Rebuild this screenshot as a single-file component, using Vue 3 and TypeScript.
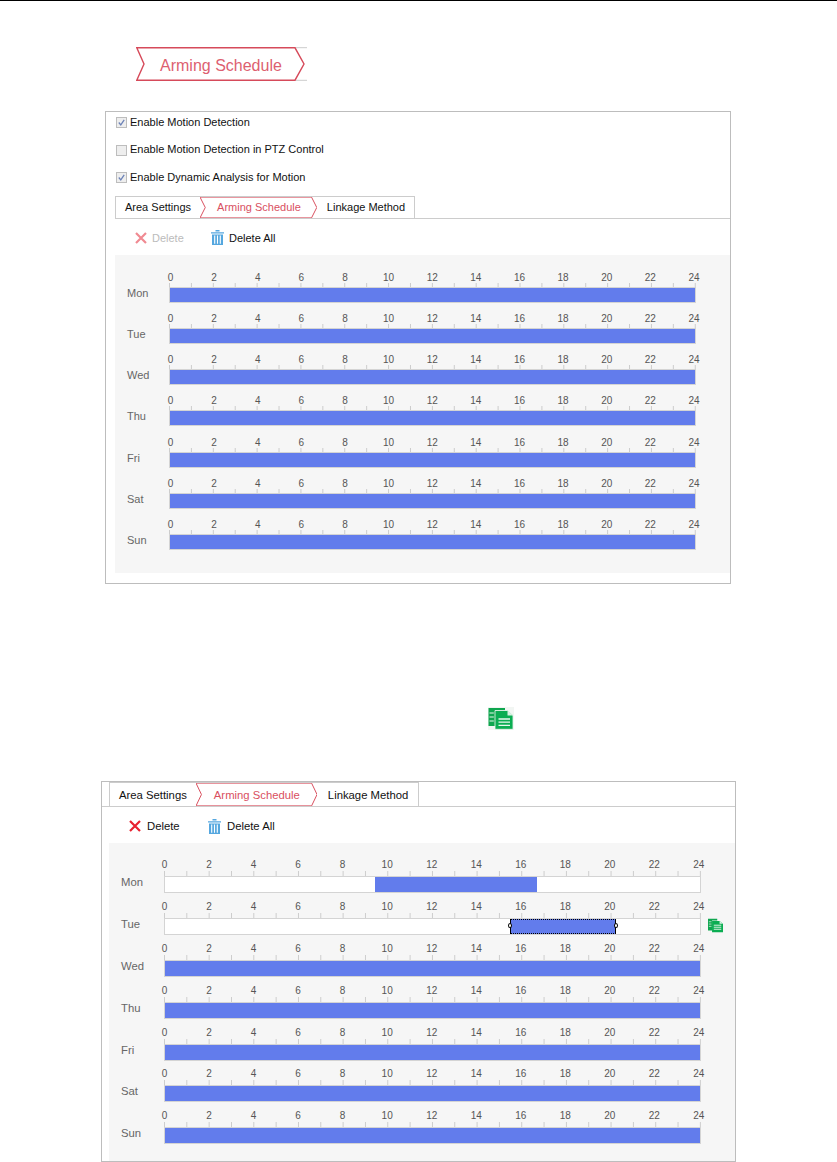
<script setup lang="ts">
interface Seg { left: number; width: number; selected?: boolean }
interface Day { name: string; segs: Seg[]; copy?: boolean }

const full: Seg[] = [{ left: 0, width: 100 }]
const names = ['Mon', 'Tue', 'Wed', 'Thu', 'Fri', 'Sat', 'Sun']
const hours = Array.from({ length: 13 }, (_, i) => i * 2)
const checks = [
  { label: 'Enable Motion Detection', on: true },
  { label: 'Enable Motion Detection in PTZ Control', on: false },
  { label: 'Enable Dynamic Analysis for Motion', on: true },
]
const daysA: Day[] = names.map((name) => ({ name, segs: full }))
const daysB: Day[] = names.map((name) => ({ name, segs: full }))
daysB[0] = { name: 'Mon', segs: [{ left: 39.25, width: 30.2 }] }
daysB[1] = { name: 'Tue', segs: [{ left: 64.4, width: 19.9, selected: true }], copy: true }

const panels = [
  { key: 'a', days: daysA, checks, deleteOn: false },
  { key: 'b', days: daysB, checks: [], deleteOn: true },
]
</script>

<template>
  <div class="page">
    <div class="rule"></div>

    <div class="banner">
      <svg class="shape" viewBox="0 0 171 34" preserveAspectRatio="none">
        <path d="M159 0.7H171M159 33.3H171" stroke="#ccc" fill="none" />
        <path d="M0.8 0.8H159L168 17L159 33.2H0.8L8 17Z" stroke="#d64a5a" stroke-width="1.4" fill="none" />
      </svg>
      <span>Arming Schedule</span>
    </div>

    <template v-for="p in panels" :key="p.key">
      <div v-if="p.key === 'b'" class="copy-line">
        <svg class="copy big" viewBox="0 0 26 23">
          <rect width="26" height="23" fill="#f2f6f3" />
          <path d="M0.5 1H17V3.5H7V19H0.5Z" fill="#0fa64f" />
          <path d="M1.5 6H5.8M1.5 10H5.8M1.5 14H5.8" stroke="#e8f7ee" stroke-width="1.2" />
          <path d="M7 3.5H19.5L25 8.5V22.3H7Z" fill="#0bad52" stroke="#f2f6f3" stroke-width="0.8" />
          <path d="M19.5 3.5V8.5H25Z" fill="#d8f1e2" />
          <path d="M10.5 12H22M10.5 15.2H22M10.5 18.4H22" stroke="#e8f7ee" stroke-width="1.3" />
        </svg>
      </div>

      <section class="panel" :class="`panel-${p.key}`">
        <label v-for="c in p.checks" :key="c.label" class="check">
          <span class="box">
            <svg v-if="c.on" viewBox="0 0 10 10"><path d="M2 5L4.2 7.6L8 2" stroke="#6d83b8" stroke-width="1.4" fill="none" /></svg>
          </span>
          {{ c.label }}
        </label>

        <div class="tabline">
          <div class="tabs">
            <span class="tab first">Area Settings</span>
            <span class="tab active">
              <svg class="shape" viewBox="0 0 100 100" preserveAspectRatio="none">
                <path d="M0 0.5H95.5L100 50L95.5 99.5H0L4.5 50Z" fill="#fff" stroke="#d9505f" stroke-width="1" vector-effect="non-scaling-stroke" />
              </svg>
              <em>Arming Schedule</em>
            </span>
            <span class="tab last">Linkage Method</span>
          </div>
        </div>

        <div class="tools">
          <span class="tool del" :class="{ off: !p.deleteOn }">
            <svg class="x" viewBox="0 0 12 12"><path d="M1 1L11 11M11 1L1 11" stroke-width="2.2" fill="none" /></svg>
            Delete
          </span>
          <span class="tool all">
            <svg class="trash" viewBox="0 0 13 15">
              <path d="M0 2.2H13V3.4H0ZM4.5 0H8.5V1.4H4.5ZM1 4.4H12V15H1Z" fill="#55a7df" />
              <path d="M3.7 5.5V13.8M6.5 5.5V13.8M9.3 5.5V13.8" stroke="#fff" stroke-width="1.1" />
            </svg>
            Delete All
          </span>
        </div>

        <div class="sched">
          <div v-for="d in p.days" :key="d.name" class="row">
            <span class="day">{{ d.name }}</span>
            <div class="track">
              <div class="scale">
                <span v-for="h in hours" :key="h" class="hr"><i>{{ h }}</i></span>
              </div>
              <div class="ticks"></div>
              <div class="bar">
                <div
                  v-for="(s, i) in d.segs"
                  :key="i"
                  class="seg"
                  :class="{ sel: s.selected }"
                  :style="{ left: s.left + '%', width: s.width + '%' }"
                >
                  <template v-if="s.selected"><b class="h l"></b><b class="h r"></b></template>
                </div>
                <svg v-if="d.copy" class="copy small" viewBox="0 0 26 23">
                  <path d="M0 0H16V3H7V20H0Z" fill="#0fa64f" />
                  <path d="M1.5 5H6M1.5 9H6M1.5 13H6" stroke="#e8f7ee" stroke-width="1.2" />
                  <path d="M7 3.5H20L26 8.5V23H7Z" fill="#0bad52" />
                  <path d="M20 3.5V8.5H26" fill="#d8f1e2" />
                  <path d="M10 11H23M10 14.5H23M10 18H23" stroke="#e8f7ee" stroke-width="1.6" />
                </svg>
              </div>
            </div>
          </div>
        </div>
      </section>
    </template>
  </div>
</template>

<style>
html, body { margin: 0; background: #fff; overflow: hidden; }
</style>

<style scoped>
.page {
  width: 837px;
  height: 1162px;
  overflow: hidden;
  font-family: "Liberation Sans", Arial, sans-serif;
  font-size: 11px;
  color: #111;
  display: flex;
  flex-direction: column;
}
.rule { height: 1px; background: #000; flex: none; }
.shape { position: absolute; inset: 0; width: 100%; height: 100%; display: block; }

.banner {
  position: relative;
  box-sizing: border-box;
  width: 171px;
  height: 34px;
  margin: 46px 0 0 136px;
  padding: 4px 0 0 24px;
  display: flex;
  align-items: center;
  font-size: 16px;
  color: #dd5f70;
  flex: none;
}
.banner span { position: relative; }

.panel { border: 1px solid #bdbdbd; box-sizing: border-box; flex: none; }
.panel-a { width: 626px; height: 473px; margin: 30px 0 0 105px; padding: 0 0 9px 9px; }
.panel-b { width: 635px; height: 381px; margin: 0 0 0 101px; padding: 0 0 0 7px; font-size: 11.3px; }

.check {
  height: 27.5px;
  display: flex;
  align-items: center;
  gap: 3px;
  padding-left: 1px;
}
.panel-a .check:first-child { margin-top: -4px; }
.box {
  width: 9px;
  height: 9px;
  margin-top: 2px;
  border: 1px solid #bdbdbd;
  background: #eee;
  flex: none;
}
.box svg { display: block; width: 9px; height: 9px; }

.tabline { border-bottom: 1px solid #ccc; }
.panel-a .tabline { margin-top: 5px; height: 22px; }
.panel-b .tabline { margin-left: -7px; padding-left: 7px; height: 24px; }
.tabs { display: inline-flex; height: 100%; box-sizing: border-box; border: 1px solid #ccc; border-bottom: 0; }
.tab { position: relative; display: flex; align-items: center; white-space: nowrap; }
.tab em { position: relative; font-style: normal; color: #d9505f; }
.panel-a .first { padding: 0 9px; }
.panel-a .active { padding: 0 16px 0 17px; margin-right: -4px; }
.panel-a .last { padding: 0 9px 0 14px; }
.panel-b .first { padding: 0 9px; }
.panel-b .active { padding: 0 17px 0 18px; margin-right: -4px; }
.panel-b .last { padding: 0 10px 0 15px; }

.tools {
  display: flex;
  align-items: center;
  height: 36px;
  padding: 2px 0 0 20px;
  box-sizing: border-box;
}
.tool { display: flex; align-items: center; }
.x { width: 12px; height: 12px; stroke: #e8212f; }
.del { gap: 6px; color: #111; }
.panel-a .del { gap: 5px; width: 76px; }
.panel-b .del { width: 79px; }
.del.off { color: #bbb; }
.del.off .x { stroke: #f08a92; }
.trash { width: 13px; height: 15px; }
.all { gap: 5px; }
.panel-b .all { gap: 6px; }

.sched { background: #f6f6f6; height: 318px; box-sizing: border-box; }
.panel-a .sched { padding-top: 12px; }
.panel-b .sched { padding-top: 11px; }
.row { display: flex; position: relative; }
.panel-a .row { height: 41.33px; }
.panel-b .row { height: 41.9px; }
.day { color: #666; flex: none; padding-left: 12px; box-sizing: border-box; }
.panel-a .day { width: 54px; padding-top: 20px; }
.panel-b .day { width: 55px; padding-top: 22px; }
.track { display: flex; flex-direction: column; }
.panel-a .track { width: 527px; }
.panel-b .track { width: 537px; }
.scale {
  height: 11px;
  margin-top: 5px;
  display: flex;
  justify-content: space-between;
  font-size: 10px;
  color: #555;
}
.panel-a .scale { padding: 0 2px 0 1.5px; }
.panel-b .scale { height: 12px; padding: 0 2px 0 0.5px; }
.hr { width: 0; display: flex; justify-content: center; line-height: 12px; }
.hr i { font-style: normal; }
.ticks { background-image: linear-gradient(to right, #ccc 1px, transparent 1px); }
.panel-a .ticks { height: 4px; background-size: 21.92px 100%; }
.panel-b .ticks { height: 5px; background-size: 22.33px 100%; }
.bar {
  position: relative;
  box-sizing: border-box;
  background: #fff;
  border: 1px solid #d4d4d4;
}
.panel-a .bar { height: 16px; }
.panel-b .bar { height: 17px; }
.seg { position: absolute; top: 0; bottom: 0; background: #627cec; }
.seg.sel {
  box-sizing: border-box;
  border: 1px dotted #000;
  border-left: 1px solid #000;
  border-right: 1px solid #000;
}
.h {
  position: absolute;
  top: 50%;
  width: 2px;
  height: 3px;
  margin-top: -3px;
  background: #fff;
  border: 1px solid #000;
  border-radius: 50%;
}
.h.l { left: -3px; }
.h.r { right: -3px; }
.copy { display: block; }
.copy-line { flex: none; height: 197px; padding-top: 123px; box-sizing: border-box; }
.copy.big { width: 26px; height: 23px; margin-left: 488px; }
.copy.small { position: absolute; left: 100%; top: -1px; margin-left: 8px; width: 15px; height: 15px; }
</style>
